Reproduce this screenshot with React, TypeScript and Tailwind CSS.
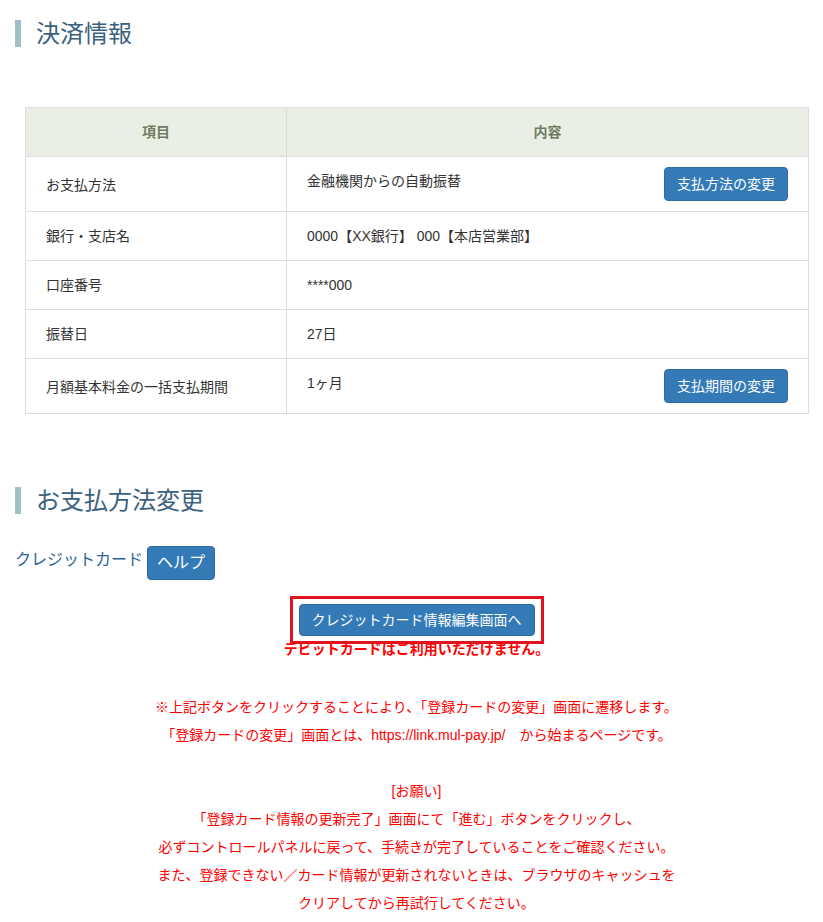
import React from 'react';

const FONT = { fontFamily: '"Liberation Sans", "Noto Sans CJK JP", sans-serif' };

const rows: { label: string; value: string; action?: string }[] = [
  { label: 'お支払方法', value: '金融機関からの自動振替', action: '支払方法の変更' },
  { label: '銀行・支店名', value: '0000【XX銀行】 000【本店営業部】' },
  { label: '口座番号', value: '****000' },
  { label: '振替日', value: '27日' },
  { label: '月額基本料金の一括支払期間', value: '1ヶ月', action: '支払期間の変更' },
];

const SectionTitle: React.FC<{ children: React.ReactNode }> = ({ children }) => (
  <h2 className="flex items-center h-[27px]">
    <span className="w-[6px] h-[27px] bg-[#9fc0c7]" />
    <span className="ml-[15px] text-[24px] leading-[27px] text-[#3b6180]">{children}</span>
  </h2>
);

const Button: React.FC<{ children: React.ReactNode; className?: string }> = ({ children, className }) => (
  <button className={`bg-[#337ab7] border border-[#2e6da4] rounded-[4px] text-white ${className ?? ''}`}>
    {children}
  </button>
);

const App: React.FC = () => {
  return (
    <div className="min-h-screen bg-white px-[15px] pt-[20px] pb-[10px]" style={FONT}>
      <SectionTitle>決済情報</SectionTitle>

      <table className="ml-[10px] mt-[60px] w-[784px] border-collapse text-[14px] text-[#333]">
        <thead>
          <tr className="bg-[#eaefe6] h-[49px]">
            <th className="w-[261px] border border-[#dddddd] font-bold text-[#6e7c60] text-center">項目</th>
            <th className="border border-[#dddddd] font-bold text-[#6e7c60] text-center">内容</th>
          </tr>
        </thead>
        <tbody>
          {rows.map((r) => (
            <tr key={r.label} className={r.action ? 'h-[55px]' : 'h-[49px]'}>
              <td className="border border-[#dddddd] px-[20px] align-middle">
                <span className={r.action ? 'relative top-[1px]' : ''}>{r.label}</span>
              </td>
              <td className="border border-[#dddddd] pl-[20px] pr-[20px] align-middle">
                {r.action ? (
                  <div className="flex items-center justify-between">
                    <span className="relative -top-[3px]">{r.value}</span>
                    <Button className="h-[34px] px-[12px] text-[14px]">{r.action}</Button>
                  </div>
                ) : (
                  r.value
                )}
              </td>
            </tr>
          ))}
        </tbody>
      </table>

      <div className="mt-[73px]">
        <SectionTitle>お支払方法変更</SectionTitle>
      </div>

      <div className="mt-[32px] flex items-start">
        <span className="text-[16px] leading-[24px] text-[#2a6496] mt-[2px]">クレジットカード</span>
        <Button className="ml-[4px] h-[34px] w-[68px] text-[16px]">ヘルプ</Button>
      </div>

      <div className="flex flex-col items-center text-center">
        <div className="mt-[16px] border-[3px] border-[#e0141e] px-[6px] py-[5px] ml-[10px]">
          <Button className="h-[32px] px-[12px] text-[14px]">クレジットカード情報編集画面へ</Button>
        </div>
        <p className="-mt-[5px] text-[14px] leading-[20px] font-bold text-[#ff0000] ml-[10px]">
          デビットカードはご利用いただけません。
        </p>

        <div className="mt-[34px] text-[14px] leading-[28px] text-[#ff0000] ml-[10px]">
          <p>※上記ボタンをクリックすることにより、「登録カードの変更」画面に遷移します。</p>
          <p>「登録カードの変更」画面とは、https://link.mul-pay.jp/　から始まるページです。</p>
          <p>&nbsp;</p>
          <p>[お願い]</p>
          <p>「登録カード情報の更新完了」画面にて「進む」ボタンをクリックし、</p>
          <p>必ずコントロールパネルに戻って、手続きが完了していることをご確認ください。</p>
          <p>また、登録できない／カード情報が更新されないときは、ブラウザのキャッシュを</p>
          <p>クリアしてから再試行してください。</p>
        </div>
      </div>
    </div>
  );
};

export default App;
